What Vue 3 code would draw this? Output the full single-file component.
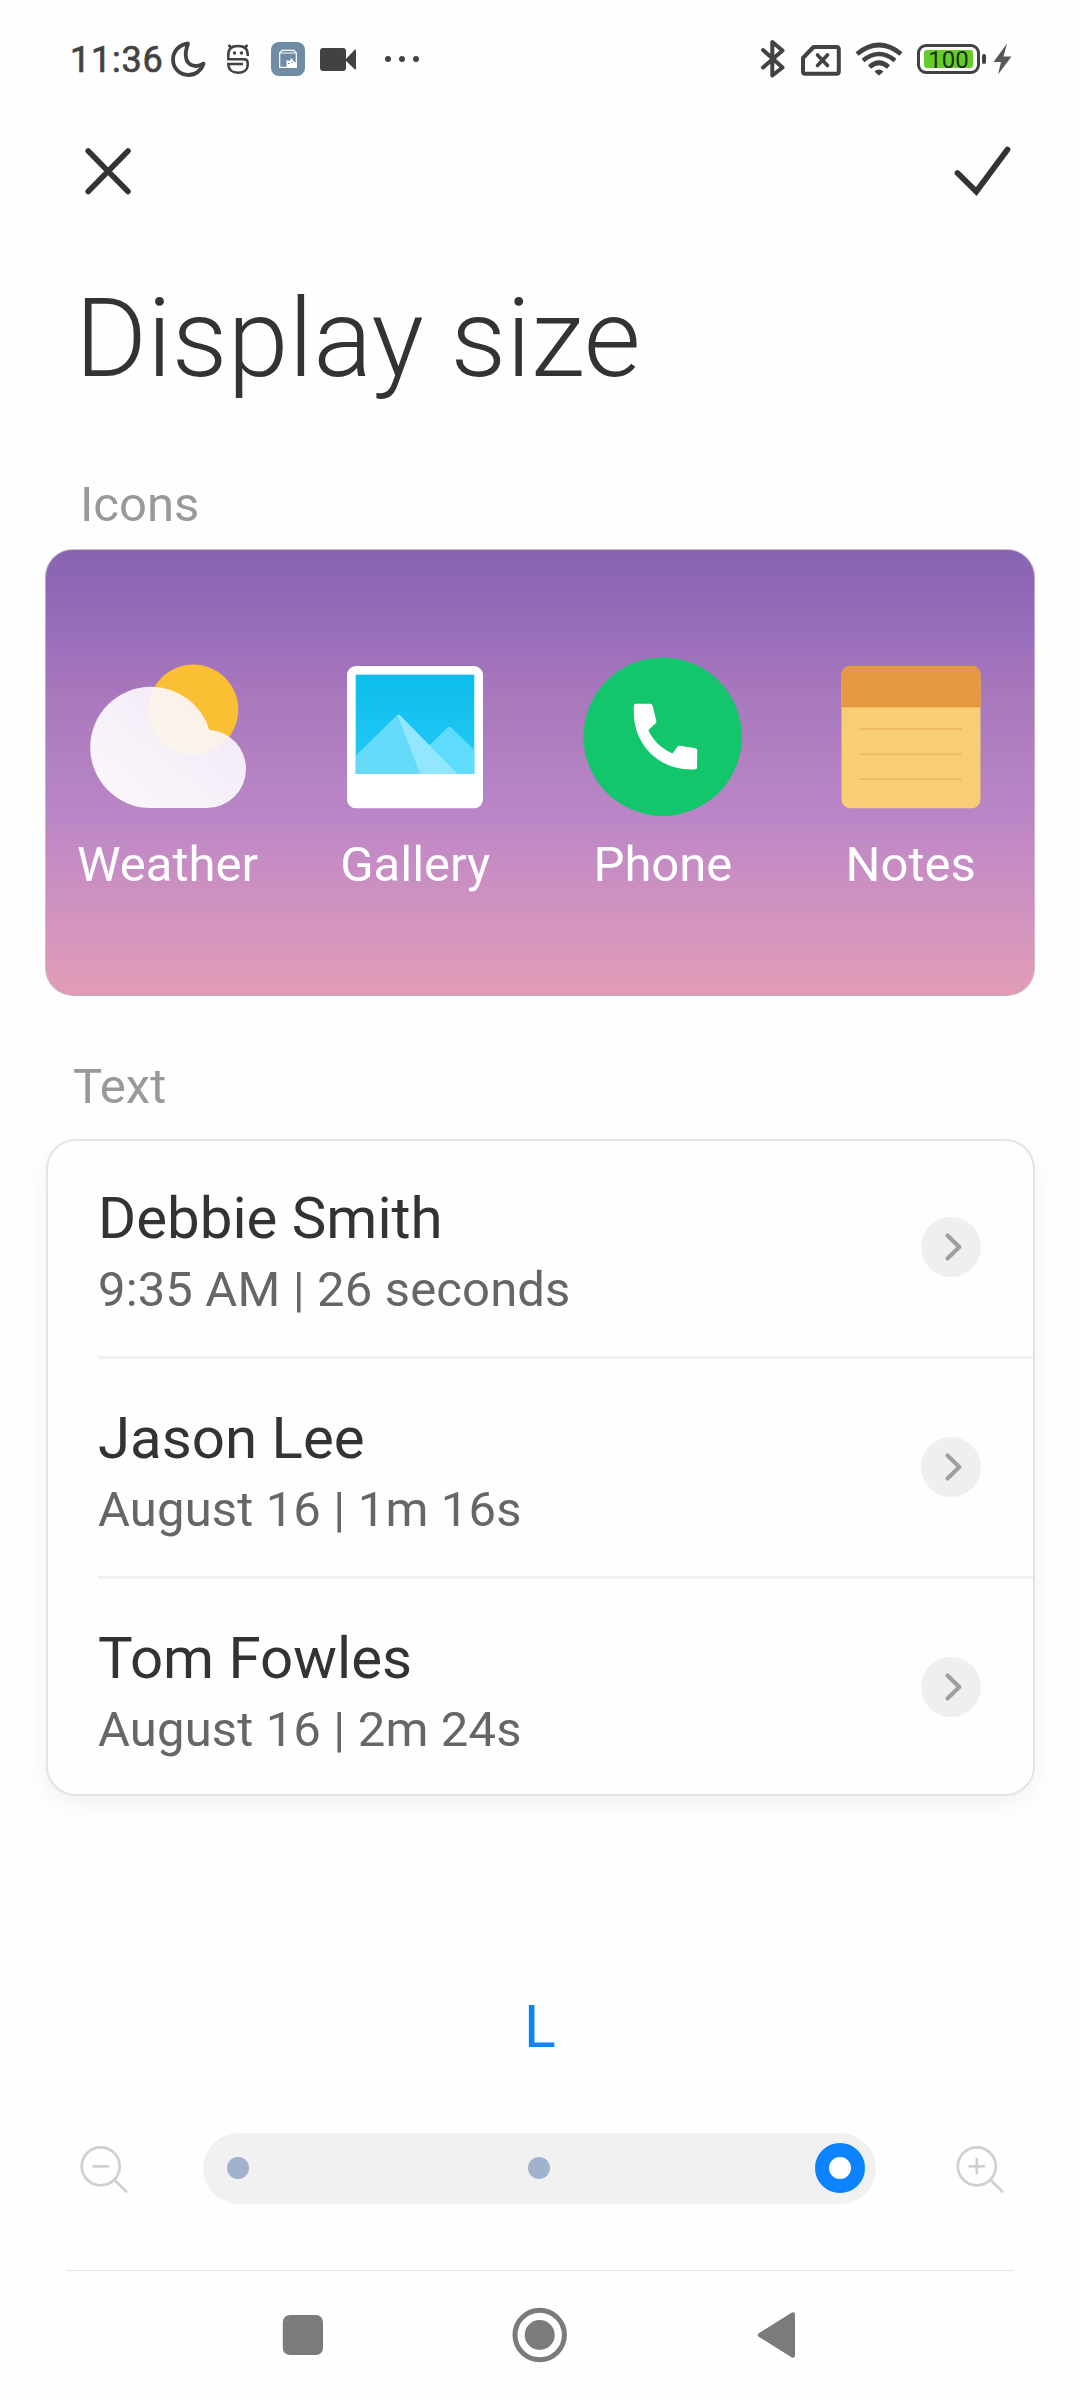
<script setup>
const apps = ['Weather', 'Gallery', 'Phone', 'Notes']

const calls = [
  { name: 'Debbie Smith', detail: '9:35 AM | 26 seconds' },
  { name: 'Jason Lee', detail: 'August 16 | 1m 16s' },
  { name: 'Tom Fowles', detail: 'August 16 | 2m 24s' },
]

const sizes = ['S', 'M', 'L']
const selected = 'L'
</script>

<template>
  <div class="screen">
    <header class="status">
      <span class="time">11:36</span>
      <svg class="moon" width="36" height="40" viewBox="170 39 36 40">
        <path d="M188 43.5C179 44.500 173 51.500 173 59.500C173 68.500 180 75 188.500 75C195.500 75 201.500 70.500 203.500 63.500C200 66 196.500 66.500 193 65.500C186 63.500 183.500 56 188 43.500Z" fill="none" stroke="#424242" stroke-width="3.800" stroke-linejoin="round" />
      </svg>
      <svg class="face" width="24" height="40" viewBox="226 39 24 40">
        <g fill="none" stroke="#424242" stroke-width="2.500">
          <path d="M247.700 56V54.500C247.700 49 244 46 238 46S228.300 49 228.300 54.500V59.300H244Q247.700 59.300 247.700 63V64.500C247.700 70 243.500 72.700 238 72.700S228.300 70 228.300 64H243" />
          <path d="M228.500 45L232 48.500M247.500 45L244 48.500" />
        </g>
        <circle cx="234.500" cy="53" r="1.700" fill="#424242" />
        <circle cx="241.500" cy="53" r="1.700" fill="#424242" />
      </svg>
      <svg class="app-badge" width="34" height="40" viewBox="271 39 34 40">
        <rect x="271" y="42" width="34" height="34" rx="8" fill="#6f8ca4" />
        <path d="M279.700 53L282 50.300H294L296.300 53V67.300H279.700ZM279.700 53H296.300" fill="none" stroke="#fff" stroke-width="1.200" />
        <path d="M286.500 67.500V60L289.500 61L291.500 58L293 60.500L296.500 63.500V67.500Z" fill="#fff" />
        <path d="M288 63.500H289.500M291.500 62.500H293" stroke="#6f8ca4" stroke-width="1" />
      </svg>
      <svg class="video" width="38" height="40" viewBox="319 39 38 40">
        <rect x="320" y="48" width="26" height="23" rx="3" fill="#424242" />
        <path d="M345 60L355 49.500Q356 49 356 50.500V68.500Q356 70 355 69.500Z" fill="#424242" />
      </svg>
      <svg class="dots" width="36" height="40" viewBox="384 39 36 40" fill="#424242">
        <circle cx="388" cy="59" r="3" />
        <circle cx="402" cy="59" r="3" />
        <circle cx="416" cy="59" r="3" />
      </svg>

      <svg class="bluetooth" width="26" height="40" viewBox="760 39 26 40">
        <path d="M763 50L782.500 67.500L772.300 75.500V42L782.500 50.500L763 67.500" fill="none" stroke="#424242" stroke-width="4" stroke-linecap="round" stroke-linejoin="round" />
      </svg>
      <svg class="sim" width="42" height="40" viewBox="800 39 42 40" fill="none" stroke="#424242" stroke-linecap="round">
        <path d="M813.500 47H836.500Q838.800 47 838.800 49.500V71.500Q838.800 73.800 836.500 73.800H805.300Q803 73.800 803 71.500V58Z" stroke-width="4" stroke-linejoin="round" />
        <path d="M817.500 55L827.500 65.500M827.500 55L817.500 65.500" stroke-width="3.600" />
      </svg>
      <svg class="wifi" width="48" height="40" viewBox="855 39 48 40" fill="none" stroke="#424242" stroke-width="4.600">
        <path d="M857 54Q879 36 901 54" />
        <path d="M863 60.500Q879 47.500 895 60.500" />
        <path d="M869.500 67Q879 58.500 888.500 67" />
        <path d="M874.500 71.500Q879 67.500 883.500 71.500L879.800 75Q879 75.700 878.200 75Z" fill="#424242" stroke="none" />
      </svg>
      <div class="battery"><span>100</span></div>
      <svg class="bolt" width="32" height="40" viewBox="981 39 32 40">
        <path d="M1007 43.500L993.500 62H1001L998 74.500L1011.500 56.500H1003.500Z" fill="#575757" />
      </svg>
    </header>

    <nav class="actions">
      <svg width="52" height="54" viewBox="83 144 52 54">
        <path d="M88.200 151L128 191.500M128 151L88.200 191.500" stroke="#333" stroke-width="5.500" stroke-linecap="round" />
      </svg>
      <svg width="62" height="54" viewBox="952 144 62 54">
        <path d="M957.500 173L976.300 191.500L1007.500 149.500" fill="none" stroke="#333" stroke-width="5.800" stroke-linecap="round" />
      </svg>
    </nav>

    <h1>Display size</h1>

    <h2 class="icons-label">Icons</h2>
    <section class="preview">
      <div v-for="app in apps" :key="app" class="app">
        <svg v-if="app === 'Weather'" width="160" height="160" viewBox="0 0 160 160">
          <defs>
            <linearGradient id="cloud" x1="0" y1="1" x2="1" y2="0.200">
              <stop offset="0" stop-color="#fff" stop-opacity="0.950" />
              <stop offset="0.450" stop-color="#fdfbff" stop-opacity="0.920" />
              <stop offset="1" stop-color="#f9f6fc" stop-opacity="0.890" />
            </linearGradient>
          </defs>
          <circle cx="105.300" cy="52.500" r="45" fill="#fabf33" />
          <path d="M62.800 29.800A60.700 60.700 0 0 1 121.300 72.700A39.200 39.200 0 0 1 158 112A39 39 0 0 1 119 151H62.800A60.600 60.600 0 0 1 2.200 90.400A60.600 60.600 0 0 1 62.800 29.800Z" fill="url(#cloud)" />
        </svg>
        <svg v-else-if="app === 'Gallery'" width="160" height="160" viewBox="0 0 160 160">
          <defs>
            <linearGradient id="sky" x1="0" y1="0" x2="0" y2="1">
              <stop offset="0" stop-color="#0cbdea" />
              <stop offset="1" stop-color="#25caf6" />
            </linearGradient>
          </defs>
          <rect x="12" y="9" width="136" height="142.300" rx="9" fill="#fff" />
          <rect x="20.700" y="17.700" width="118.600" height="99.300" fill="url(#sky)" />
          <path d="M94.700 88L112.300 70.700Q114.300 69 116.300 70.700L139.300 92.700V117H94Z" fill="#5fdbfd" />
          <path d="M20.700 98.700L61.300 59Q63.300 57 65 59L86 117H20.700Z" fill="#66dbf9" />
          <path d="M62.500 57.800Q63.800 57 65.500 58.700L122.700 117H85.300Z" fill="#92e7ff" />
        </svg>
        <svg v-else-if="app === 'Phone'" width="160" height="160" viewBox="0 0 160 160">
          <circle cx="79.700" cy="79.700" r="79.200" fill="#13c56b" />
          <path d="M52.500 46.800H67Q69.200 46.800 69.700 49L73.300 64Q73.700 65.500 72.500 66.500L66 72.500Q65.200 73.500 65.900 74.500C71.500 85 79 91.500 88.500 96Q89.700 96.500 90.500 95.300L94.300 89.800Q95.200 88.400 97 88.700L112.500 91.300Q114.300 91.700 114.300 93.500L114 110.500Q114 112 112.500 112.200C78 115 47.500 88 51 48.300Q51.200 46.800 52.500 46.800Z" fill="#fff" />
        </svg>
        <svg v-else width="160" height="160" viewBox="0 0 160 160">
          <rect x="10.500" y="9" width="139" height="142.300" rx="9" fill="#f7cd76" />
          <path d="M10.500 50V18Q10.500 9 19.500 9H140.500Q149.500 9 149.500 18V50Z" fill="#e79842" />
          <path d="M10.500 49.700H149.500" stroke="#ea8a30" stroke-width="1" />
          <path d="M28 72H131M28 97.300H131M28 122.300H131" stroke="#ecb862" stroke-width="1.500" />
        </svg>
        <span>{{ app }}</span>
      </div>
    </section>

    <h2 class="text-label">Text</h2>
    <ul class="calls">
      <li v-for="call in calls" :key="call.name">
        <div>
          <p class="name">{{ call.name }}</p>
          <p class="detail">{{ call.detail }}</p>
        </div>
        <svg width="60" height="60" viewBox="0 0 60 60">
          <circle cx="30" cy="30" r="30" fill="#efefef" />
          <path d="M26.500 18.500L38.300 30L26.500 41.500" fill="none" stroke="#9f9f9f" stroke-width="4.200" stroke-linecap="round" stroke-linejoin="round" />
        </svg>
      </li>
    </ul>

    <p class="size-name">{{ selected }}</p>
    <div class="scale">
      <svg width="52" height="52" viewBox="78 2143 52 52" fill="none" stroke="#d0d0d0" stroke-width="2.700" stroke-linecap="round">
        <circle cx="100.700" cy="2166.300" r="19" />
        <path d="M114.500 2180L126.300 2191.500M93.500 2166.300H108" />
      </svg>
      <div class="track">
        <span v-for="size in sizes" :key="size" class="stop" :class="{ on: size === selected }"></span>
      </div>
      <svg width="52" height="52" viewBox="953.500 2143 52 52" fill="none" stroke="#d0d0d0" stroke-width="2.700" stroke-linecap="round">
        <circle cx="976.300" cy="2166.300" r="19" />
        <path d="M990.200 2180L1001.700 2191.500M969 2166.300H983.500M976.300 2159V2173.500" />
      </svg>
    </div>

    <footer class="system-nav">
      <svg width="60" height="60" viewBox="0 0 60 60">
        <rect x="9.800" y="10" width="40.200" height="40" rx="7" fill="#7b7b7b" />
      </svg>
      <svg width="60" height="60" viewBox="0 0 60 60">
        <circle cx="29.700" cy="30" r="24.700" fill="none" stroke="#7b7b7b" stroke-width="5" />
        <circle cx="29.700" cy="30" r="15" fill="#7b7b7b" />
      </svg>
      <svg width="60" height="60" viewBox="0 0 60 60">
        <path d="M12.800 30L46 9.300V50.700Z" fill="#7b7b7b" stroke="#7b7b7b" stroke-width="4" stroke-linejoin="round" />
      </svg>
    </footer>
  </div>
</template>

<style>
body {
  background: #fefefe;
}
</style>

<style scoped>
.screen {
  display: flex;
  flex-direction: column;
  width: 1080px;
  height: 2400px;
  overflow: hidden;
  background: #fefefe;
  color: #333;
  font-family: Roboto, sans-serif;
}
svg {
  display: block;
  flex: none;
}
h1,
h2,
p,
ul {
  margin: 0;
  padding: 0;
  font-weight: 400;
}
.status {
  display: flex;
  align-items: center;
  height: 118px;
  box-sizing: border-box;
  padding-left: 70px;
}
.time {
  width: 100px;
  margin-top: 2px;
  font-size: 36px;
  line-height: 40px;
  font-weight: 400;
  letter-spacing: 0.8px;
  color: #424242;
  -webkit-text-stroke: 0.7px #424242;
}
.face {
  margin-left: 20px;
}
.app-badge {
  margin-left: 21px;
}
.video {
  margin-left: 14px;
}
.dots {
  margin-left: 27px;
}
.bluetooth {
  margin-left: 340px;
}
.sim {
  margin-left: 14px;
}
.wifi {
  margin-left: 13px;
}
.battery {
  position: relative;
  box-sizing: border-box;
  width: 63px;
  height: 30px;
  margin-left: 14px;
  padding: 3px 4px;
  border: 3px solid #424242;
  border-radius: 9px;
}
.battery span {
  display: block;
  height: 18px;
  border-radius: 3px;
  background: #66cc29;
  color: #1d3010;
  font-size: 24px;
  line-height: 20px;
  text-align: center;
}
.battery::after {
  content: '';
  position: absolute;
  right: -9px;
  top: 7px;
  width: 4px;
  height: 10px;
  border-radius: 2px;
  background: #424242;
}
.bolt {
  margin-left: 1px;
}
.actions {
  display: flex;
  justify-content: space-between;
  height: 54px;
  margin-top: 26px;
  padding: 0 66px 0 83px;
}
h1 {
  margin: 71px 0 0 75px;
  font-size: 110px;
  line-height: 140px;
  font-weight: 300;
}
h2 {
  font-size: 49px;
  line-height: 60px;
  color: #999;
}
.icons-label {
  margin: 66px 0 0 80px;
}
.preview {
  display: flex;
  box-sizing: border-box;
  width: 990px;
  height: 447px;
  margin: 14px 0 0 45px;
  border: 1px solid rgba(205, 200, 205, 0.7);
  border-radius: 28px;
  background: linear-gradient(#8664b2 0%, #9067b5 8%, #9a6fbb 20%, #a676bd 30%, #b17fc0 45%, #b985c6 58%, #c28ac5 66%, #cf91c0 80%, #dc9aba 93%, #e19bb6 100%);
}
.app {
  display: flex;
  flex: 0 0 247.7px;
  flex-direction: column;
  align-items: center;
  padding-top: 107px;
}
.app:first-child {
  margin-left: -2.3px;
}
.app span {
  margin-top: 18px;
  font-size: 49px;
  line-height: 60px;
  color: #fff;
}
.text-label {
  margin: 61px 0 0 73px;
}
.calls {
  box-sizing: border-box;
  width: 989px;
  height: 657px;
  margin: 22px 0 0 46px;
  padding-left: 50px;
  border: 2px solid #e3e3e3;
  border-radius: 30px;
  list-style: none;
  box-shadow: 0 8px 22px rgba(0, 0, 0, 0.05);
}
.calls li {
  display: flex;
  justify-content: space-between;
  box-sizing: border-box;
  height: 220px;
  padding: 43px 52px 0 0;
  border-bottom: 3px solid #f1f1f1;
}
.calls li:first-child {
  height: 218px;
  padding-top: 41px;
}
.calls li:last-child {
  border-bottom: 0;
}
.calls svg {
  margin-top: 35px;
}
.name {
  font-size: 58.2px;
  line-height: 72px;
}
.detail {
  font-size: 49px;
  line-height: 60px;
  letter-spacing: 0.14px;
  margin-top: 6px;
  color: #666;
}
.size-name {
  margin-top: 195px;
  font-size: 59px;
  line-height: 72px;
  text-align: center;
  color: #0d84ff;
}
.scale {
  display: flex;
  align-items: center;
  justify-content: space-between;
  height: 71px;
  margin-top: 70px;
  padding: 0 74px 0 78px;
}
.track {
  display: flex;
  align-items: center;
  justify-content: space-between;
  box-sizing: border-box;
  width: 673px;
  height: 71px;
  margin-left: -5px;
  padding: 0 11px 1px 10px;
  border-radius: 36px;
  background: #f1f1f1;
}
.stop {
  box-sizing: border-box;
  width: 22px;
  height: 22px;
  margin: 0 14px;
  border-radius: 50%;
  background: #a1b2ce;
}
.stop.on {
  width: 50px;
  height: 50px;
  margin: 0;
  border: 14px solid #0d84ff;
  background: #fff;
}
.system-nav {
  display: flex;
  justify-content: center;
  gap: 177px;
  margin: 66px 66px 0;
  padding-top: 34px;
  border-top: 1px solid #e3e3e3;
}
</style>
